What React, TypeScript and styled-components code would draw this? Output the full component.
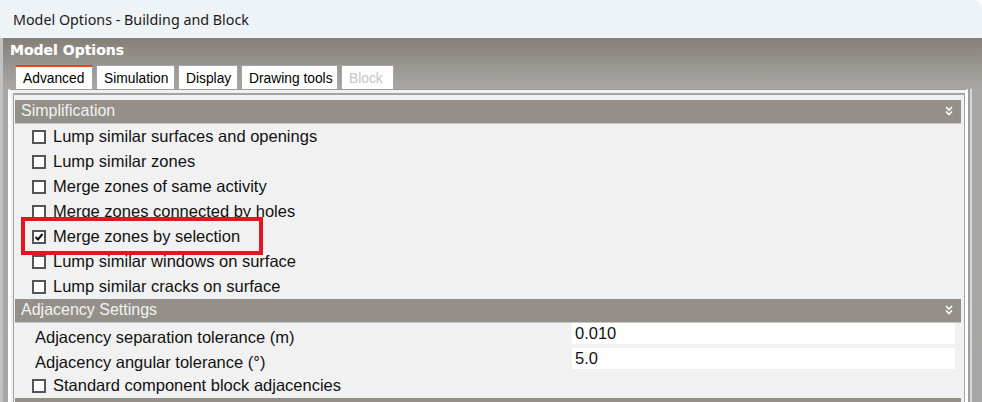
import React from "react";
import styled, { createGlobalStyle } from "styled-components";

const GlobalStyle = createGlobalStyle`
  html, body {
    margin: 0;
    padding: 0;
    background: #ffffff;
    overflow: hidden;
  }
  * {
    box-sizing: border-box;
  }
`;

interface CheckOption {
  label: string;
  checked?: boolean;
  marked?: boolean;
}

const simplification: CheckOption[] = [
  { label: "Lump similar surfaces and openings" },
  { label: "Lump similar zones" },
  { label: "Merge zones of same activity" },
  { label: "Merge zones connected by holes" },
  { label: "Merge zones by selection", checked: true, marked: true },
  { label: "Lump similar windows on surface" },
  { label: "Lump similar cracks on surface" },
];

const tabs = [
  { name: "Advanced", width: 78, active: true },
  { name: "Simulation", width: 79 },
  { name: "Display", width: 60 },
  { name: "Drawing tools", width: 97 },
  { name: "Block", width: 53, disabled: true },
];

function ChevronDown() {
  return (
    <svg width="8" height="10" viewBox="0 0 8 10">
      <path d="M1 1 L4 4 L7 1 M1 5.5 L4 8.5 L7 5.5" fill="none" stroke="#ffffff" strokeWidth="1.6" />
    </svg>
  );
}

function CheckBox({ checked }: { checked?: boolean }) {
  return (
    <Box>
      {checked && (
        <svg width="10" height="10" viewBox="0 0 10 10">
          <path d="M1.5 5 L4 7.5 L8.5 2" fill="none" stroke="#111111" strokeWidth="2" />
        </svg>
      )}
    </Box>
  );
}

function SectionHeader({ title }: { title?: string }) {
  return (
    <Header>
      <span>{title}</span>
      <ChevronDown />
    </Header>
  );
}

export default function App() {
  return (
    <>
      <GlobalStyle />
      <Window>
        <TitleBar>Model Options - Building and Block</TitleBar>
        <Frame>
          <Heading>Model Options</Heading>
          <TabStrip>
            {tabs.map((t) => (
              <Tab key={t.name} $width={t.width} $active={t.active} $disabled={t.disabled}>
                {t.name}
              </Tab>
            ))}
          </TabStrip>
          <TabPage>
            <ListPanel>
              <SectionHeader title="Simplification" />
              {simplification.map((o) => (
                <OptionRow key={o.label}>
                  <CheckBox checked={o.checked} />
                  <span>{o.label}</span>
                  {o.marked && <Highlight />}
                </OptionRow>
              ))}
              <SectionHeader title="Adjacency Settings" />
              <FieldRow>
                <FieldLabel>Adjacency separation tolerance (m)</FieldLabel>
                <FieldInput>0.010</FieldInput>
              </FieldRow>
              <FieldRow>
                <FieldLabel>Adjacency angular tolerance (°)</FieldLabel>
                <FieldInput>5.0</FieldInput>
              </FieldRow>
              <OptionRow>
                <CheckBox />
                <span>Standard component block adjacencies</span>
              </OptionRow>
              {/* next group, only its top edge shows */}
              <SectionHeader />
            </ListPanel>
          </TabPage>
        </Frame>
      </Window>
    </>
  );
}

const Window = styled.div`
  width: 982px;
  height: 402px;
  display: flex;
  flex-direction: column;
  overflow: hidden;
`;

const TitleBar = styled.div`
  height: 38px;
  flex: none;
  display: flex;
  align-items: center;
  padding-left: 13px;
  background: #eef3f8;
  border-top-right-radius: 8px;
  color: #1a1a1a;
  font-family: "Noto Sans", "Open Sans", sans-serif;
  font-size: 14.3px;
`;

const Frame = styled.div`
  flex: 1;
  display: flex;
  flex-direction: column;
  border-left: 3px solid #c2c2c2;
  background: linear-gradient(#857f78 0px, #a9a7a4 50px, #a6a6a6 100%);
  min-height: 0;
`;

const Heading = styled.div`
  height: 27px;
  flex: none;
  padding: 4px 0 0 7px;
  color: #ffffff;
  font-family: "DejaVu Sans", sans-serif;
  font-weight: bold;
  font-size: 14px;
  line-height: 17px;
  text-shadow: 0 0 1px rgba(255, 255, 255, 0.4);
`;

const TabStrip = styled.div`
  height: 24px;
  flex: none;
  display: flex;
  gap: 3px;
  padding-left: 12px;
`;

const Tab = styled.div<{ $width: number; $active?: boolean; $disabled?: boolean }>`
  width: ${(p) => p.$width}px;
  height: 24px;
  background: #ffffff;
  border: 1px solid #a3a3a3;
  border-bottom: none;
  border-top: ${(p) => (p.$active ? "2px solid #e8470f" : "1px solid #a3a3a3")};
  padding: ${(p) => (p.$active ? "3px 0 0 7px" : "4px 0 0 7px")};
  color: ${(p) => (p.$disabled ? "#c4c4c4" : "#000000")};
  font-family: "Liberation Sans", Arial, sans-serif;
  font-size: 13.8px;
  line-height: 17px;
  white-space: nowrap;
`;

const TabPage = styled.div`
  flex: 1;
  margin: 0 14px 0 5px;
  border-top: 1px solid #9c9c9c;
  background: #f0f0f0;
  border-left: 3px solid #ffffff;
  border-right: 3px solid #ffffff;
  box-shadow: 2px 0 0 #9e9e9e, 4px 0 0 #d8d8d8;
  padding: 3px 0 0 2px;
  min-height: 0;
`;

const ListPanel = styled.div`
  height: 100%;
  border: 1px solid #a4a4a4;
  border-top: 2px solid #a4a4a4;
  border-bottom: none;
  padding: 5px 3px 0 1px;
  background: #f1f1f1;
  font-family: "Liberation Sans", Arial, sans-serif;
  font-size: 16.5px;
  color: #111111;
`;

const Header = styled.div`
  height: 24px;
  display: flex;
  align-items: center;
  justify-content: space-between;
  padding: 0 8px 1px 6px;
  background: #958f89;
  color: #f2f2f2;
  font-size: 16px;
  border-bottom: 1px solid #c8c6c4;
`;

const OptionRow = styled.div`
  position: relative;
  height: 25px;
  display: flex;
  align-items: center;
  gap: 7px;
  padding-left: 17px;
  white-space: nowrap;
`;

const Box = styled.div`
  width: 14px;
  height: 14px;
  flex: none;
  display: flex;
  align-items: center;
  justify-content: center;
  background: #ffffff;
  border: 2px solid #555555;
`;

const Highlight = styled.div`
  position: absolute;
  top: -7px;
  left: 6px;
  width: 242px;
  height: 38px;
  border: 4px solid #e2161c;
  pointer-events: none;
`;

const FieldRow = styled.div`
  height: 25px;
  display: flex;
  align-items: flex-start;
  white-space: nowrap;
`;

const FieldLabel = styled.div`
  width: 557px;
  flex: none;
  padding: 6px 0 0 20px;
  line-height: 17px;
`;

const FieldInput = styled.div`
  width: 383px;
  height: 21px;
  padding: 1px 0 0 3px;
  background: #ffffff;
  line-height: 19px;
`;
